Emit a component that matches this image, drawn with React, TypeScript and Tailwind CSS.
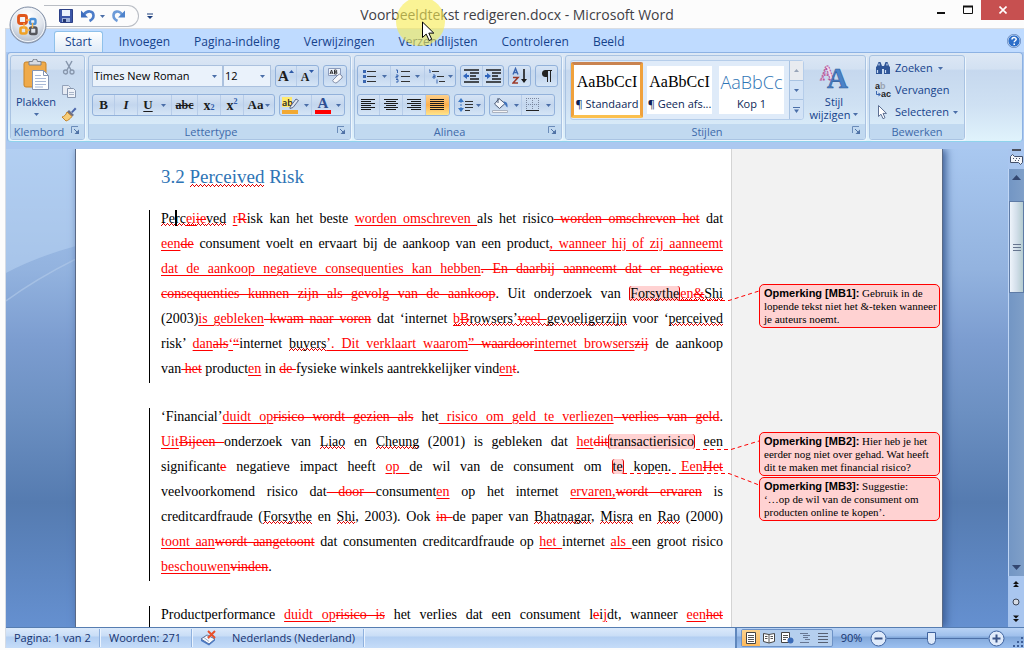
import React from "react";

const UI = "font-['Open_Sans','Noto_Sans',sans-serif]";

/* ---------- small building blocks ---------- */

function Arrow({ className = "" }: { className?: string }) {
  return (
    <svg className={"shrink-0 " + className} width="5" height="3" viewBox="0 0 5 3" aria-hidden="true">
      <path d="M0 0h5L2.5 3z" fill="#4a6ea8" />
    </svg>
  );
}

function Icon({ w = 16, h = 16, children }: { w?: number; h?: number; children: React.ReactNode }) {
  return (
    <svg className="shrink-0" width={w} height={h} viewBox={`0 0 ${w} ${h}`} fill="none" aria-hidden="true">
      {children}
    </svg>
  );
}

function Btn({ label, className = "", children }: { label: string; className?: string; children: React.ReactNode }) {
  return (
    <button type="button" aria-label={label} className={"flex h-full items-center justify-center " + className}>
      {children}
    </button>
  );
}

function Cluster({ children }: { children: React.ReactNode }) {
  return (
    <div className="flex h-[22px] divide-x divide-[#b7cce8] rounded-[3px] border border-[#92b1da] bg-gradient-to-b from-[#d6e4f5] via-[#c3d6ee] to-[#d5e5f6]">
      {children}
    </div>
  );
}

function Launcher({ label }: { label: string }) {
  return (
    <button type="button" aria-label={label} className="absolute right-[4px] top-[2px]">
      <Icon w={9} h={9}>
        <path d="M0.5 7V.5H7" stroke="#6b8cb9" />
        <path d="M3 3l3 3" stroke="#4f72a6" />
        <path d="M8 3.5V8H3.5z" fill="#4f72a6" />
      </Icon>
    </button>
  );
}

function Group({ title, launcher = true, className = "", children }: { title: string; launcher?: boolean; className?: string; children: React.ReactNode }) {
  return (
    <section aria-label={title} className={"flex h-[85px] shrink-0 flex-col overflow-hidden rounded-[3px] border border-[#a9c3e2] shadow-[1px_1px_0_#eef6fd] " + className}>
      <div className="min-h-0 flex-1">{children}</div>
      <div className={"relative h-[15px] bg-[#c1d9f0] text-center text-[11px] leading-[15px] text-[#3e6aaa] " + (launcher ? "pr-[17px]" : "")}>
        {title}
        {launcher && <Launcher label={title + " opties"} />}
      </div>
    </section>
  );
}

/* ---------- title bar ---------- */

function TitleBar() {
  return (
    <header className="relative flex h-[28px] shrink-0 items-start bg-[#fcfcfc]">
      <div className="flex w-[155px] shrink-0 items-center pl-[44px] pt-[5px]">
        <div className="flex h-[22px] w-[95px] items-center rounded-r-full border border-l-0 border-[#b9bdc4] pl-[14px]">
          <Btn label="Opslaan">
            <Icon>
              <path d="M1.500 1.500h13v13h-12l-1-1z" fill="#3b56a8" stroke="#2b3f86" />
              <path d="M4 2h8v6H4z" fill="#eaf1fb" />
              <path d="M4 10h8v4H4z" fill="#9fb3dc" />
              <path d="M5 11h3v3H5z" fill="#24366f" />
            </Icon>
          </Btn>
          <Btn label="Ongedaan maken" className="ml-[6px]">
            <Icon>
              <path d="M4 6.500C7 2 13.500 2.500 13.500 7.500c0 3-2 4.500-4 5.500" stroke="#4c7cc8" strokeWidth="2.600" />
              <path d="M1 2.500v7h7z" fill="#3d6dbd" />
            </Icon>
          </Btn>
          <Arrow className="ml-[4px]" />
          <Btn label="Opnieuw" className="ml-[6px]">
            <Icon>
              <path d="M11 6.500C8 2 2.500 3 2.500 7.500c0 3 2 4.500 4 5.500" stroke="#6d9bd8" strokeWidth="2.600" />
              <path d="M14 2.500v7H7z" fill="#4f83cc" />
            </Icon>
          </Btn>
        </div>
        <Btn label="Werkbalk aanpassen" className="ml-[8px]">
          <Icon w={6} h={7}>
            <path d="M0 1h6" stroke="#1d3f7d" />
            <path d="M0 3h6L3 6z" fill="#1d3f7d" />
          </Icon>
        </Btn>
      </div>
      <h1 className="min-w-0 flex-1 truncate text-center text-[14px] leading-[30px] text-[#3f3f46]">Voorbeeldtekst redigeren.docx - Microsoft Word</h1>
      <div className="flex h-[20px] w-[145px] shrink-0 justify-end">
        <Btn label="Minimaliseren" className="w-[27px]">
          <Icon w={10} h={10}><path d="M1 8h8" stroke="#111" strokeWidth="2" /></Icon>
        </Btn>
        <Btn label="Maximaliseren" className="w-[27px]">
          <Icon w={10} h={10}><path d="M.5 1.500h9v7h-9z" stroke="#111" /><path d="M0 1.500h10" stroke="#111" strokeWidth="2" /></Icon>
        </Btn>
        <Btn label="Sluiten" className="w-[43px] bg-[#c75050]">
          <Icon w={8} h={8}><path d="M.5.5l7 7M7.500.5l-7 7" stroke="#fff" strokeWidth="1.600" /></Icon>
        </Btn>
      </div>
      <button type="button" aria-label="Office-knop" className="absolute left-[9px] top-[6px] z-10">
        <Icon w={38} h={38}>
          <defs>
            <radialGradient id="orb" cx=".5" cy=".25" r=".8">
              <stop offset="0" stopColor="#ffffff" />
              <stop offset=".55" stopColor="#dfe4ec" />
              <stop offset="1" stopColor="#a3afc2" />
            </radialGradient>
          </defs>
          <circle cx="19" cy="19" r="18" fill="url(#orb)" stroke="#7f8da4" />
          <circle cx="19" cy="19" r="16.500" stroke="#f4f7fb" />
          <rect x="9.500" y="9.500" width="8" height="8" rx="2" stroke="#e0561b" strokeWidth="2.800" />
          <rect x="21" y="13" width="5.500" height="5" rx="1.500" stroke="#4a8fd6" strokeWidth="2.400" />
          <rect x="11.500" y="21.500" width="6" height="6" rx="1.500" stroke="#f0a125" strokeWidth="2.600" />
          <rect x="21" y="21.500" width="6.500" height="6.500" rx="1.500" stroke="#55565c" strokeWidth="2.400" />
          <path d="M17 14h4M17 24h4M15 17v5M23.500 17v5" stroke="#f6b24a" strokeWidth="1.400" />
        </Icon>
      </button>
    </header>
  );
}

const TABS = ["Invoegen", "Pagina-indeling", "Verwijzingen", "Verzendlijsten", "Controleren", "Beeld"];

function Tabs() {
  return (
    <nav className="flex h-[24px] shrink-0 items-end border-t border-[#d9dde3] bg-[#bfdbff] pl-[48px] pr-[3px] text-[12px] text-[#15428b]">
      <button type="button" className="mr-[4px] h-[21px] rounded-t-[3px] border border-b-0 border-[#8fc1ea] bg-gradient-to-b from-white to-[#e0ebf7] px-[10px] leading-[20px]">Start</button>
      {TABS.map((t) => (
        <button key={t} type="button" className="h-[21px] px-[12px] leading-[20px]">{t}</button>
      ))}
      <button type="button" aria-label="Help" className="mb-[4px] ml-auto">
        <Icon w={14} h={14}>
          <circle cx="7" cy="7" r="6.200" fill="#2d6fc9" stroke="#e9f2fd" />
          <circle cx="7" cy="7" r="6.700" stroke="#3a65a6" strokeWidth=".6" />
          <path d="M5 5.500C5 3 9.200 3 9.200 5.300 9.200 6.800 7.200 6.700 7.200 8.300" stroke="#fff" strokeWidth="1.500" />
          <path d="M6.400 9.400h1.600V11H6.400z" fill="#fff" />
        </Icon>
      </button>
    </nav>
  );
}

/* ---------- ribbon ---------- */

function Clipboard() {
  return (
    <Group title="Klembord" className="w-[75px]">
      <div className="flex h-full pl-[3px]">
        <button type="button" className="flex w-[44px] flex-col items-center pt-[3px] text-[11px] leading-[14px] text-[#15428b]">
          <Icon w={28} h={32}>
            <rect x="2" y="3" width="22" height="25" rx="2" fill="#efaa4a" stroke="#c98325" />
            <path d="M7 5V2.500h3.500a2.500 2.500 0 0 1 5 0H19V6H7z" fill="#d7dbe2" stroke="#7a828f" />
            <path d="M10.500 11.500h11l5 5v14h-16z" fill="#fff" stroke="#8494b3" />
            <path d="M21.500 11.500v5h5" stroke="#8494b3" />
            <path d="M13 16.500h6M13 19.500h11M13 22.500h11M13 25.500h11M13 28h8" stroke="#a9b9d6" />
          </Icon>
          <span className="mt-[4px]">Plakken</span>
          <Arrow className="mt-[4px]" />
        </button>
        <div className="flex h-[66px] flex-col items-center justify-between pl-[3px] pt-[4px]">
          <Btn label="Knippen" className="h-[16px]!"><Icon>
            <path d="M5 1l5 9M11 1L6 10" stroke="#8796ac" strokeWidth="1.500" />
            <circle cx="4.500" cy="12" r="2" stroke="#8796ac" strokeWidth="1.300" />
            <circle cx="11" cy="12" r="2" stroke="#8796ac" strokeWidth="1.300" />
          </Icon></Btn>
          <Btn label="Kopiëren" className="h-[16px]!"><Icon>
            <path d="M1.500 2.500h6l2 2v7h-8z" fill="#e6ebf3" stroke="#93a2ba" />
            <path d="M6.500 5.500h6l2 2v7h-8z" fill="#eef2f8" stroke="#8796ae" />
            <path d="M8 9.500h5M8 11.500h5" stroke="#a9b5c8" />
          </Icon></Btn>
          <Btn label="Opmaak kopiëren" className="h-[16px]!"><Icon>
            <path d="M10 6l4-4.500 1.500 1.500L11.500 7z" fill="#4b66ab" />
            <path d="M8 4l5 5-2 1.500-5-4.500z" fill="#6d6f86" />
            <path d="M6 6l5 4.500C9 13 7 14.500 5 15L1 11c2-.5 4-2 5-5z" fill="#f6cd79" stroke="#c4852d" />
          </Icon></Btn>
        </div>
      </div>
    </Group>
  );
}

function Combo({ label, value, className }: { label: string; value: string; className: string }) {
  return (
    <div className={"relative " + className}>
      <select aria-label={label} defaultValue={value} className="block h-[22px] w-full appearance-none border border-[#abc1de] bg-[#eaf2fb] pl-[1px] text-[11px] leading-[20px] text-black">
        <option>{value}</option>
      </select>
      <Arrow className="pointer-events-none absolute right-[6px] top-[10px]" />
    </div>
  );
}

const SERIF_BTN = "font-['Liberation_Serif',serif] font-bold text-[#1c1c1c]";

function FontGroup() {
  return (
    <Group title="Lettertype" className="w-[263px]">
      <div className="flex flex-col gap-[7px] pl-[3px] pt-[9px]">
        <div className="flex">
          <Combo label="Lettertype" value="Times New Roman" className="w-[131px]" />
          <Combo label="Tekengrootte" value="12" className="mr-[4px] w-[48px]" />
          <Cluster>
            <Btn label="Groter" className={"w-[21px] text-[15px] leading-[20px] " + SERIF_BTN}>A<Icon w={5} h={12}><path d="M0 3h5L2.500 0z" fill="#2e5aa8" /></Icon></Btn>
            <Btn label="Kleiner" className={"w-[21px] pt-[2px] text-[12px] leading-[18px] " + SERIF_BTN}>A<Icon w={5} h={14}><path d="M0 0h5L2.500 3z" fill="#2e5aa8" /></Icon></Btn>
          </Cluster>
          <div className="w-[4px]" />
          <Cluster>
            <Btn label="Opmaak wissen" className="w-[22px]"><Icon w={18} h={18}>
              <path d="M2.500 1.500h12v7h-12z" fill="#eef3fb" stroke="#8c9cbd" />
              <path d="M4 7l1.500-4L7 7M4.500 6h2M8.500 3v4h1.500a1 1 0 0 0 0-2H8.500h1.300a1 1 0 0 0 0-2z" stroke="#222" strokeWidth=".9" />
              <path d="M7 13l5-5a2 2 0 0 1 3 0l1 1a2 2 0 0 1 0 2l-5 4.500a2 2 0 0 1-2.500 0l-1.500-1a1 1 0 0 1 0-1.500z" fill="#f7f8fb" stroke="#7f8ba5" />
            </Icon></Btn>
          </Cluster>
        </div>
        <div className="flex gap-[4px]">
          <Cluster>
            <Btn label="Vet" className={"w-[22px] text-[13px] " + SERIF_BTN}>B</Btn>
            <Btn label="Cursief" className={"w-[23px] text-[13px] italic " + SERIF_BTN}>I</Btn>
            <Btn label="Onderstrepen" className={"w-[34px] gap-[8px] text-[13px] " + SERIF_BTN}><span className="underline underline-offset-2">U</span><Arrow /></Btn>
            <Btn label="Doorhalen" className={"w-[26px] text-[12px] line-through " + SERIF_BTN}>abc</Btn>
            <Btn label="Subscript" className={"w-[23px] text-[14px] " + SERIF_BTN}>x<span className="self-end pb-[1px] text-[8px] text-[#2e5aa8]">2</span></Btn>
            <Btn label="Superscript" className={"w-[23px] text-[14px] " + SERIF_BTN}>x<span className="self-start pt-[1px] text-[8px] text-[#2e5aa8]">2</span></Btn>
            <Btn label="Hoofdletters" className={"w-[30px] gap-[2px] text-[13px] " + SERIF_BTN}>Aa<Arrow /></Btn>
          </Cluster>
          <Cluster>
            <Btn label="Markeren" className="w-[32px] gap-[5px]">
              <Icon w={17} h={18}>
                <path d="M0 1h10v10H0z" fill="#ffe96b" />
                <path d="M0 14h16v4H0z" fill="#f2a933" />
                <text x="0" y="10" fontSize="9" fontFamily="Open Sans" fontWeight="600" fill="#222">ab</text>
                <path d="M8 11l6-8 2.500 1.500-5.500 7-3 1z" fill="#dfe5ef" stroke="#5c6b8a" />
              </Icon>
              <Arrow />
            </Btn>
            <Btn label="Tekstkleur" className="w-[32px] gap-[5px]">
              <span className="flex h-[18px] w-[16px] items-center justify-center border-b-4 border-[#ff0000] font-['Liberation_Serif',serif] text-[15px] font-bold leading-[14px] text-[#2f4f92]">A</span>
              <Arrow />
            </Btn>
          </Cluster>
        </div>
      </div>
    </Group>
  );
}

function Lines({ d }: { d: string }) {
  return <Icon w={15} h={13}><path d={d} stroke="#1a1a1a" /></Icon>;
}

function ParagraphGroup() {
  return (
    <Group title="Alinea" className="w-[208px]">
      <div className="flex flex-col gap-[7px] pl-[2px] pt-[9px]">
        <div className="flex gap-[4px]">
          <Cluster>
            <Btn label="Opsommingstekens" className="w-[33px] gap-[5px]"><Icon w={15} h={14}>
              <path d="M5 2.500h9M5 7.500h9M5 12.500h9" stroke="#333" />
              <path d="M1 1h3v3H1zM1 6h3v3H1zM1 11h3v3H1z" fill="#3a66b0" />
            </Icon><Arrow /></Btn>
            <Btn label="Nummering" className="w-[34px] gap-[5px]"><Icon w={15} h={14}>
              <path d="M6 2.500h9M6 7.500h9M6 12.500h9" stroke="#333" />
              <path d="M1 1h1.500v3M1 6h2v1.500H1V9h2M1 10.500h2V13H1" stroke="#3a66b0" />
            </Icon><Arrow /></Btn>
            <Btn label="Lijst met meerdere niveaus" className="w-[30px] gap-[3px]"><Icon w={17} h={15}>
              <path d="M4 2.500h7M9 7.500h7M11 12.500h6" stroke="#333" />
              <path d="M1 1h1v3M5 6h2v3H5V7.500h2M9 10.500v4" stroke="#3a66b0" />
            </Icon><Arrow /></Btn>
          </Cluster>
          <Cluster>
            <Btn label="Inspringing verkleinen" className="w-[22px]"><Icon w={17} h={14}>
              <path d="M1 1h15M7 4h9M7 7h6M7 10h9M1 13h15" stroke="#1a1a1a" strokeWidth="1.600" />
              <path d="M0 7l4-3v2h2v2H4v2z" fill="#2f65bd" />
            </Icon></Btn>
            <Btn label="Inspringing vergroten" className="w-[20px]"><Icon w={17} h={14}>
              <path d="M1 1h15M7 4h9M7 7h6M7 10h9M1 13h15" stroke="#1a1a1a" strokeWidth="1.600" />
              <path d="M6 7L2 4v2H0v2h2v2z" fill="#2f65bd" />
            </Icon></Btn>
          </Cluster>
          <Cluster>
            <Btn label="Sorteren" className="w-[21px]"><Icon w={16} h={18}>
              <path d="M1 7.500L3.500 1.500 6 7.500M2 5.500h3" stroke="#3a66b0" strokeWidth="1.400" />
              <path d="M1 10.500h5l-5 5.500h5" stroke="#9c3a2a" strokeWidth="1.600" />
              <path d="M12 2v12" stroke="#1a1a1a" strokeWidth="1.600" />
              <path d="M9 12h6l-3 4z" fill="#1a1a1a" />
            </Icon></Btn>
          </Cluster>
          <Cluster>
            <Btn label="Alineamarkeringen" className="w-[21px]"><Icon w={12} h={14}>
              <path d="M6 1H4.500a3.300 3.300 0 0 0 0 7H6z" fill="#222" />
              <path d="M4 1.500h7M6.500 1v12M9.500 1v12" stroke="#222" />
            </Icon></Btn>
          </Cluster>
        </div>
        <div className="flex gap-[4px]">
          <Cluster>
            <Btn label="Links uitlijnen" className="w-[22px]"><Lines d="M0 .5h14M0 2.500h10M0 4.500h14M0 6.500h10M0 8.500h14M0 10.500h10" /></Btn>
            <Btn label="Centreren" className="w-[23px]"><Lines d="M0 .5h14M2 2.500h10M0 4.500h14M2 6.500h10M0 8.500h14M2 10.500h10" /></Btn>
            <Btn label="Rechts uitlijnen" className="w-[23px]"><Lines d="M0 .5h14M4 2.500h10M0 4.500h14M4 6.500h10M0 8.500h14M4 10.500h10" /></Btn>
            <Btn label="Uitvullen" className="w-[23px] rounded-r-[2px] bg-gradient-to-b from-[#fcd08b] via-[#fdb04c] to-[#fee58c]"><Lines d="M0 .5h14M0 2.500h14M0 4.500h14M0 6.500h14M0 8.500h14M0 10.500h14" /></Btn>
          </Cluster>
          <Cluster>
            <Btn label="Regelafstand" className="w-[29px] gap-[2px]"><Icon w={16} h={16}>
              <path d="M7 4.500h8M7 7.500h8M7 10.500h8M7 13.500h5" stroke="#333" />
              <path d="M0 5l3-4 3 4zM0 11l3 4 3-4z" fill="#3a76c4" />
              <path d="M3 4v8" stroke="#3a76c4" strokeDasharray="2 1" />
            </Icon><Arrow /></Btn>
          </Cluster>
          <Cluster>
            <Btn label="Arcering" className="w-[32px] gap-[5px]"><Icon w={17} h={16}>
              <path d="M7 1.500l6 5-5.500 5-5-4.500z" fill="#f3f6fb" stroke="#4a5975" />
              <path d="M6 1v5" stroke="#4a5975" />
              <path d="M11.500 4.500c3 0 4.500 2 4 6-1.500-1-2-2.500-3-3.500z" fill="#3f73bd" />
              <path d="M.5 13.500h15v2H.5z" fill="#f4f4f4" stroke="#aab2c0" />
            </Icon><Arrow /></Btn>
            <Btn label="Randen" className="w-[32px] gap-[6px]"><Icon w={14} h={14}>
              <path d="M.5 0v13M6.500 0v13M12.500 0v13M0 .5h13M0 6.500h13" stroke="#7a869e" strokeDasharray="1 1" />
              <path d="M0 12.500h13" stroke="#222" />
            </Icon><Arrow /></Btn>
          </Cluster>
        </div>
      </div>
    </Group>
  );
}

function StyleCard({ sample, label, className = "", sampleClass = "" }: { sample: string; label: string; className?: string; sampleClass?: string }) {
  return (
    <button type="button" className={"flex shrink-0 flex-col items-center overflow-hidden whitespace-nowrap bg-white text-[11px] " + className}>
      <span className={"w-full " + sampleClass}>{sample}</span>
      <span className="leading-[20px] text-[#0b1f57]">{label}</span>
    </button>
  );
}

function StylesGroup() {
  return (
    <Group title="Stijlen" className="w-[301px]">
      <div className="flex pl-[4px] pt-[4px]">
        <div className="flex h-[60px] w-[234px] items-center rounded-[3px] border border-[#b5cdea] bg-[#dfebf9]">
          <StyleCard sample="AaBbCcI" label="¶ Standaard" className="h-[56px] w-[72px] rounded-[2px] border-[3px] border-[#f0a13c] border-t-[#c98350] border-b-[#fbc04f] pt-[5px]" sampleClass="font-['Liberation_Serif',serif] text-[16px] leading-[24px] text-black" />
          <StyleCard sample="AaBbCcI" label="¶ Geen afs..." className="ml-[4px] h-[48px] w-[65px] pt-[4px]" sampleClass="font-['Liberation_Serif',serif] text-[16px] leading-[24px] text-black" />
          <StyleCard sample="AaBbCc" label="Kop 1" className="ml-[7px] h-[48px] w-[65px] pt-[4px]" sampleClass="text-center text-[18px] font-light leading-[24px] text-[#2e74b5]" />
          <div className="ml-auto flex h-full w-[14px] flex-col divide-y divide-[#a9c3e2] rounded-r-[3px] border-l border-[#a9c3e2] bg-[#d3e3f6]">
            <button type="button" aria-label="Omhoog" className="flex flex-1 items-center justify-center bg-[#e8ebf0]"><Icon w={5} h={3}><path d="M0 3h5L2.500 0z" fill="#98a4b8" /></Icon></button>
            <button type="button" aria-label="Omlaag" className="flex flex-1 items-center justify-center"><Arrow /></button>
            <button type="button" aria-label="Meer" className="flex flex-1 items-center justify-center"><Icon w={7} h={6}><path d="M0 .5h7" stroke="#4a6ea8" /><path d="M1 2.500h5L3.500 6z" fill="#4a6ea8" /></Icon></button>
          </div>
        </div>
        <button type="button" className="flex w-[60px] flex-col items-center text-[11px] leading-[13px] text-[#15428b]">
          <Icon w={30} h={32}>
            <g fontFamily="Liberation Serif" fontWeight="bold">
              <text x="1" y="20" fontSize="20" fill="#f3dcef" stroke="#b04f96" strokeWidth="1" strokeDasharray="2 1">A</text>
              <text x="8" y="28" fontSize="29" fill="#4a83c8" stroke="#2f5a9a" strokeWidth=".6">A</text>
            </g>
          </Icon>
          <span className="mt-[3px]">Stijl</span>
          <span className="flex items-center gap-[3px]">wijzigen<Arrow /></span>
        </button>
      </div>
    </Group>
  );
}

function EditGroup() {
  return (
    <Group title="Bewerken" launcher={false} className="w-[96px]">
      <div className="flex flex-col pl-[5px] pt-[1px] text-[11px] text-[#15428b]">
        <button type="button" className="flex h-[22px] items-center gap-[4px]">
          <Icon>
            <path d="M2 6l1.500-4h2L7 6v8H1V7zM14 6l-1.500-4h-2L9 6v8h6V7z" fill="#2f5597" />
            <path d="M6.500 6h3v3h-3z" fill="#2f5597" />
            <path d="M2.500 10v3M10.500 10v3M4 3.500v2M12 3.500v2" stroke="#c9dbf5" strokeWidth="1.200" />
          </Icon>
          Zoeken<Arrow className="ml-[1px]" />
        </button>
        <button type="button" className="flex h-[22px] items-center gap-[4px]">
          <span className="flex w-[16px] flex-col font-['Liberation_Sans',sans-serif] text-[9px] font-bold leading-[8px]">
            <span className="text-left text-[#222]">a<span className="text-[#9aa3b1]">b</span></span>
            <span className="flex items-center justify-end text-[#222]">
              <Icon w={5} h={6}><path d="M.5 0v3.500H3" stroke="#3a66b0" /><path d="M2.500 1.500L5 3.500 2.500 5.500z" fill="#3a66b0" /></Icon>ac
            </span>
          </span>
          Vervangen
        </button>
        <button type="button" className="flex h-[22px] items-center gap-[4px]">
          <Icon><path d="M3.500 1.500v11l2.500-2.300 2 4.500 2-1-2-4.300h3.500z" fill="#fff" stroke="#5d6f92" /></Icon>
          Selecteren<Arrow />
        </button>
      </div>
    </Group>
  );
}

function Ribbon() {
  return (
    <div className="bg-[#abc8f0] pb-[7px] pl-[1px] pr-[1px]">
      <div className="flex h-[90px] items-start gap-[3px] overflow-hidden rounded-[4px] border border-[#8db2e3] border-b-[#8fd3ec] bg-[linear-gradient(180deg,#dde8f5_0%,#d3e1f2_18%,#c6d8ee_20%,#cfe1f3_60%,#e0f3fc_100%)] pl-[2px] pt-[2px]">
        <Clipboard />
        <FontGroup />
        <ParagraphGroup />
        <StylesGroup />
        <EditGroup />
      </div>
    </div>
  );
}

/* ---------- document ---------- */

/* Flags: i inserted, d deleted, s spelling mark, c commented */
type Run = string | [string, string];

const SPELL =
  "bg-[image:linear-gradient(90deg,#e00000_1px,transparent_1px),linear-gradient(90deg,#e00000_1px,transparent_1px),linear-gradient(90deg,#e00000_1px,transparent_1px)] bg-[size:4px_1px,2px_1px,4px_1px] bg-[position:0_100%,1px_calc(100%_-_1px),2px_calc(100%_-_2px)] bg-repeat-x";

function Piece({ run }: { run: Run }) {
  if (typeof run === "string") return <>{run}</>;
  const [flags, text] = run;
  const cls = [
    flags.includes("s") ? SPELL : "",
    flags.includes("c") ? "rounded-[3px] border-x border-[#e00000] bg-[#ffd2d2]" : "",
  ].join(" ");
  if (flags.includes("d")) return <del className={"text-[#ff0000] line-through decoration-1 " + cls}>{text}</del>;
  if (flags.includes("i")) return <ins className={"text-[#ff0000] underline decoration-1 underline-offset-2 " + cls}>{text}</ins>;
  return <span className={cls}>{text}</span>;
}

const P1: Run[][] = [
  [["s", "Perc"], ["is", "ei"], ["ds", "ie"], ["s", "ved"], " ", ["i", "r"], ["d", "R"], "isk kan het beste ", ["i", "worden omschreven "], "als het risico", ["d", " worden omschreven het"], " dat"],
  [["i", "een"], ["d", "de"], " consument voelt en ervaart bij de aankoop van een product", ["i", ", wanneer hij of zij aanneemt"]],
  [["i", "dat de aankoop negatieve consequenties kan hebben"], ["d", ". En daarbij aanneemt dat er negatieve"]],
  [["d", "consequenties kunnen zijn als gevolg van de aankoop"], ". Uit onderzoek van ", ["cs", "Forsythe"], ["is", "en"], ["ds", "&"], ["s", "Shi"]],
  ["(2003)", ["i", "is gebleken"], ["d", " kwam naar voren"], " dat ‘internet ", ["is", "b"], ["ds", "B"], ["s", "rowsers’"], ["ds", "veel "], ["s", "gevoeligerzijn"], " voor ‘", ["s", "perceived"]],
  ["risk’ ", ["i", "dan"], ["d", "als"], ["i", "‘"], ["d", "“"], "internet ", ["s", "buyers"], ["i", "’. Dit verklaart waarom"], ["d", "” waardoor"], ["i", "internet browsers"], ["d", "zij"], " de aankoop"],
  ["van", ["d", " het"], " product", ["i", "en"], " in ", ["d", "de "], "fysieke winkels aantrekkelijker vind", ["i", "en"], ["d", "t"], "."],
];

const P2: Run[][] = [
  ["‘Financial’", ["i", "duidt op"], ["d", "risico wordt gezien als"], " het", ["i", " risico om geld te verliezen"], ["d", " verlies van geld"], "."],
  [["i", "Uit"], ["d", "Bijeen "], "onderzoek van ", ["s", "Liao"], " en ", ["s", "Cheung"], " (2001) is gebleken dat ", ["i", "het"], ["d", "dit"], ["c", "transactierisico"], " een"],
  ["significant", ["d", "e"], " negatieve impact heeft ", ["i", "op "], "de wil van de consument om ", ["c", "te"], " kopen. ", ["i", "Een"], ["d", "Het"]],
  ["veelvoorkomend risico dat", ["d", " door "], "consument", ["i", "en"], " op het internet ", ["i", "ervaren,"], ["d", "wordt ervaren"], " is"],
  ["creditcardfraude (", ["s", "Forsythe"], " en ", ["s", "Shi"], ", 2003). Ook ", ["d", "in "], "de paper van ", ["s", "Bhatnagar"], ", ", ["s", "Misra"], " en ", ["s", "Rao"], " (2000)"],
  [["i", "toont aan"], ["d", "wordt aangetoont"], " dat consumenten creditcardfraude op ", ["i", "het "], "internet ", ["i", "als "], "een groot risico"],
  [["i", "beschouwen"], ["d", "vinden"], "."],
];

const P3: Run[][] = [
  ["Productperformance ", ["i", "duidt op"], ["d", "risico is"], " het verlies dat een consument l", ["d", "e"], "i", ["i", "j"], "dt, wanneer ", ["i", "een"], ["d", "het"]],
];

function Paragraph({ lines, open = false }: { lines: Run[][]; open?: boolean }) {
  return (
    <p className="relative mb-[23px] text-[14px] leading-[25px] text-black before:absolute before:-left-[12px] before:top-[4px] before:-bottom-[2px] before:w-px before:bg-black">
      {lines.map((line, i) => (
        <span
          key={i}
          className={"block whitespace-nowrap " + (i < lines.length - 1 || open ? "text-justify [text-align-last:justify]" : "")}
        >
          {line.map((run, j) => <Piece key={j} run={run} />)}
        </span>
      ))}
    </p>
  );
}

function Comment({ id, lines, className }: { id: string; lines: string[]; className: string }) {
  return (
    <aside className={"h-[44px] w-[181px] whitespace-nowrap rounded-[5px] border border-[#ff0000] bg-[#ffd2d2] pl-[4px] pt-[2px] text-[11px] leading-[13px] text-black " + className}>
      <div><b className="font-['Liberation_Sans',sans-serif]">Opmerking [{id}]:</b> {lines[0]}</div>
      <div>{lines[1]}</div>
      <div>{lines[2]}</div>
    </aside>
  );
}

function Page() {
  return (
    <main className="relative flex w-[868px] shrink-0 border-x border-[#5a6a86] bg-white font-['Liberation_Serif',serif] shadow-[3px_0_8px_#3c5d94]">
      <article className="min-w-0 flex-1 pl-[85px] pr-[8px] pt-[16px]">
        <h2 className="mb-[17px] text-[19px] leading-[24px] text-[#2e74b5]">3.2 <span className={SPELL}>Perceived</span> Risk</h2>
        <Paragraph lines={P1} />
        <Paragraph lines={P2} />
        <Paragraph lines={P3} open />
      </article>
      <div className="w-[211px] shrink-0 border-l border-[#d4d4d4] bg-[#f2f2f2] pl-[27px] pt-[135px]">
        <Comment id="MB1" lines={["Gebruik in de", "lopende tekst niet het &-teken wanneer", "je auteurs noemt."]} className="mb-[104px]" />
        <Comment id="MB2" lines={["Hier heb je het", "eerder nog niet over gehad. Wat heeft", "dit te maken met financial risico?"]} className="mb-[1px]" />
        <Comment id="MB3" lines={["Suggestie:", "‘…op de wil van de consument om", "producten online te kopen’."]} className="" />
      </div>
      <svg className="pointer-events-none absolute left-0 top-0" width="700" height="400" fill="none" stroke="#ff0000" strokeDasharray="4 3" aria-hidden="true">
        <path d="M603 151.500H653L683 142" />
        <path d="M620 300.500H655L683 292" />
        <path d="M547 324.500H653L683 336" />
      </svg>
      <div className="absolute left-[99px] top-[61px] h-[16px] w-[2px] bg-black" />
    </main>
  );
}

function ScrollBar() {
  return (
    <div className="flex w-[16px] shrink-0 flex-col items-center bg-[#a9c6ef]">
      <div className="h-[2px] w-[9px] shrink-0 bg-[#4a4f5c]" />
      <Btn label="Liniaal" className="h-[18px]! shrink-0"><Icon w={13} h={12}>
        <path d="M.5 2.500l2-2 2 2h8v6l-2 2-2-2h-8z" fill="#f2f5fa" stroke="#43506b" />
        <path d="M3 4.500h1M6 4.500h1M9 4.500h1M5 6.500h1M8 6.500h1" stroke="#43506b" />
      </Icon></Btn>
      <div className="flex min-h-0 w-full flex-1 flex-col items-center border-l border-[#c0d6f5] bg-gradient-to-r from-[#7396c4] to-[#7f9fc8]">
        <Btn label="Omhoog schuiven" className="h-[16px]! shrink-0"><Icon w={9} h={5}><path d="M0 5h9L4.500 0z" fill="#33466f" /></Icon></Btn>
        <div className="mt-[16px] flex h-[92px] w-full flex-col items-center justify-center gap-[2px] border border-[#5e7ba6] bg-gradient-to-r from-[#eef4fb] via-[#d3dfea] to-[#b4ccd0]">
          <i className="h-px w-[8px] bg-[#66758f]" />
          <i className="h-px w-[8px] bg-[#66758f]" />
          <i className="h-px w-[8px] bg-[#66758f]" />
        </div>
        <Btn label="Omlaag schuiven" className="mt-auto h-[17px]! shrink-0"><Icon w={9} h={5}><path d="M0 0h9L4.500 5z" fill="#33466f" /></Icon></Btn>
      </div>
      <Btn label="Vorige" className="h-[17px]! shrink-0"><Icon w={6} h={7}><path d="M3 0l3 3H0zM3 3l3 3H0z" fill="#111" /></Icon></Btn>
      <Btn label="Bladeren" className="h-[17px]! shrink-0"><Icon w={8} h={8}><circle cx="4" cy="4" r="3" fill="#d5dbe4" stroke="#3a4356" /></Icon></Btn>
      <Btn label="Volgende" className="h-[17px]! shrink-0"><Icon w={6} h={7}><path d="M3 3.500L0 .5h6zM3 7L0 4h6z" fill="#111" /></Icon></Btn>
    </div>
  );
}

function Workspace() {
  return (
    <div className="relative flex min-h-0 flex-1 bg-[linear-gradient(180deg,#a9c8f0_0%,#93b3df_25%,#7c9dd0_40%,#6c90c2_55%,#557bb0_74%,#6590d0_100%)]">
      <svg className="absolute left-0 top-0" width="70" height="160" fill="none" aria-hidden="true">
        <path d="M0 0H70V97Q30 108 0 124Z" fill="#bcd6f4" fillOpacity=".5" />
        <path d="M0 152Q30 130 70 110" stroke="#b4cbea" strokeOpacity=".6" strokeWidth="1.500" />
      </svg>
      <div className="relative flex min-w-0 flex-1 justify-center overflow-hidden pl-[4px]">
        <Page />
      </div>
      <ScrollBar />
    </div>
  );
}

/* ---------- status bar ---------- */

function Sep() {
  return <span className="h-[18px] w-[2px] border-l border-r border-l-[#8fb1de] border-r-[#eaf3fe]" />;
}

const VIEW = "w-[18px]";

function StatusBar() {
  return (
    <footer className="flex h-[21px] shrink-0 items-center border-t border-[#567db1] bg-[linear-gradient(180deg,#dbe9fb_0%,#c9ddf6_40%,#b2cef2_45%,#c5dcf8_100%)] text-[11px] text-[#15326f]">
      <span className="w-[93px] pl-[8px]">Pagina: 1 van 2</span>
      <Sep />
      <span className="w-[90px] pl-[8px]">Woorden: 271</span>
      <Sep />
      <Btn label="Spellingcontrole" className="mx-[7px]"><Icon w={17} h={16}>
        <path d="M1 9l6-4 8 4-6 5z" fill="#f4f7fc" stroke="#5a6c92" />
        <path d="M1 9v2l8 4.500 6-5V9l-6 5z" fill="#4a78c2" />
        <path d="M7 5l2 4M4 7.500l5 4" stroke="#9bacc9" />
        <path d="M8 1l7 7M15 1L8 8" stroke="#e8502b" strokeWidth="2" />
      </Icon></Btn>
      <span className="w-[139px] pl-[8px]">Nederlands (Nederland)</span>
      <Sep />
      <div className="ml-auto flex h-full items-center border-l-2 border-[#5f87bd] bg-[linear-gradient(180deg,#b9d3f5_0%,#9fc0ec_40%,#82a8da_45%,#9cc0f0_100%)] pl-[4px]">
        <div className="flex h-[18px] overflow-hidden rounded-[2px] border border-[#6d92c6] bg-[#b5cfee]">
          <Btn label="Afdrukweergave" className={VIEW + " bg-gradient-to-b from-[#fbd28d] to-[#fdb95a]"}><Icon w={12} h={12}><path d="M1.500.5h9v11h-9z" fill="#fff" stroke="#444" /><path d="M3 3.500h6M3 5.500h6M3 7.500h6M3 9.500h6" stroke="#555" /></Icon></Btn>
          <Btn label="Lezen" className={VIEW}><Icon w={12} h={12}><path d="M.5 1.500L6 2.500l5.500-1v8L6 11 .5 9.500z" fill="#fff" stroke="#444" /><path d="M6 2v9M2 4.500h2.500M2 6.500h2.500M7.500 4.500H10M7.500 6.500H10" stroke="#555" /></Icon></Btn>
          <Btn label="Webweergave" className={VIEW}><Icon w={13} h={12}><path d="M.5.5h8v10h-8z" fill="#fff" stroke="#444" /><path d="M2 3.500h5M2 5.500h5M2 7.500h3" stroke="#555" /><circle cx="9.500" cy="8.500" r="3" fill="#3c6cb8" /></Icon></Btn>
          <Btn label="Overzicht" className={VIEW}><Icon w={12} h={12}><path d="M1 1.500h8M4 3.500h7M4 5.500h5M6 7.500h5M1 10.500h9" stroke="#667692" /></Icon></Btn>
          <Btn label="Concept" className={VIEW}><Icon w={12} h={12}><path d="M1 1.500h10M1 4.500h10M1 7.500h10M1 10.500h10" stroke="#555f72" /></Icon></Btn>
        </div>
        <span className="w-[37px] text-center">90%</span>
        <Btn label="Uitzoomen"><Icon w={17} h={17}><circle cx="8.500" cy="8.500" r="7.500" fill="#dfeafa" stroke="#3f639f" /><path d="M4.500 8.500h8" stroke="#3a5488" strokeWidth="2" /></Icon></Btn>
        <input
          type="range"
          aria-label="Zoomniveau"
          min={0}
          max={100}
          defaultValue={44}
          className="h-[14px] w-[101px] appearance-none bg-[linear-gradient(#4e71a8,#4e71a8)] bg-[size:100%_1px] bg-center bg-no-repeat [&::-webkit-slider-thumb]:h-[13px] [&::-webkit-slider-thumb]:w-[9px] [&::-webkit-slider-thumb]:appearance-none [&::-webkit-slider-thumb]:rounded-b-[5px] [&::-webkit-slider-thumb]:border [&::-webkit-slider-thumb]:border-[#3f639f] [&::-webkit-slider-thumb]:bg-[#dfeafa]"
        />
        <Btn label="Inzoomen"><Icon w={17} h={17}><circle cx="8.500" cy="8.500" r="7.500" fill="#dfeafa" stroke="#3f639f" /><path d="M4.500 8.500h8M8.500 4.500v8" stroke="#3a5488" strokeWidth="2" /></Icon></Btn>
        <span className="ml-[8px] self-end">
          <Icon w={11} h={12}><path d="M8 1h2v2H8zM8 5h2v2H8zM8 9h2v2H8zM4 5h2v2H4zM4 9h2v2H4zM0 9h2v2H0z" fill="#3f5f98" /></Icon>
        </span>
      </div>
    </footer>
  );
}

export default function App() {
  return (
    <div className={"relative flex h-screen flex-col overflow-hidden bg-[#fcfcfc] pb-[2px] " + UI}>
      <TitleBar />
      <div className="ml-[5px] flex min-h-0 flex-1 flex-col border-l border-[#d5dbe4]">
        <Tabs />
        <Ribbon />
        <Workspace />
        <StatusBar />
      </div>
      <div className="pointer-events-none absolute left-[396px] -top-[3px] z-20 size-[49px] rounded-full bg-[#f8ec50]/60" />
      <svg className="pointer-events-none absolute left-[422px] top-[21px] z-30" width="14" height="22" viewBox="0 0 14 22" aria-hidden="true">
        <path d="M.5 1v15.500l3.700-3.400 3 6.400 2.500-1.200-2.900-6.200h5z" fill="#fff" stroke="#000" />
      </svg>
    </div>
  );
}
